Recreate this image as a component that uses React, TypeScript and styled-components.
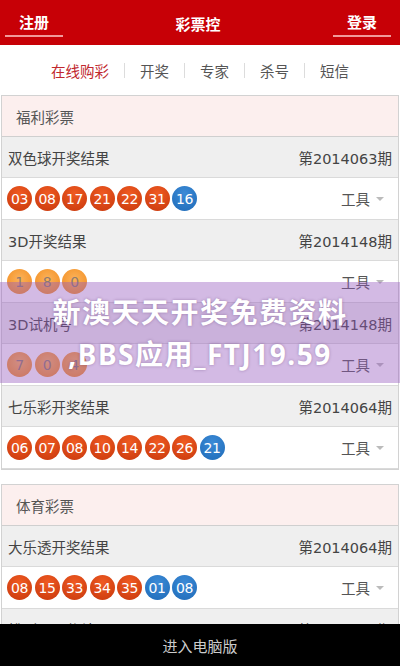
import React from 'react';
import styled, { createGlobalStyle } from 'styled-components';

const GlobalStyle = createGlobalStyle`
  html, body {
    margin: 0;
    padding: 0;
    background: #fff;
  }
  body {
    font-family: "DejaVu Sans", "Noto Sans CJK SC", sans-serif;
  }
`;

const Page = styled.div`
  position: relative;
  width: 400px;
  height: 666px;
  overflow: hidden;
  background: #fff;
`;

const Header = styled.div`
  height: 45px;
  background: #c70006;
  display: flex;
  align-items: flex-start;
  justify-content: space-between;
  padding: 0 9px 0 5px;
  box-sizing: border-box;
`;

const HeaderBtn = styled.div`
  width: 58px;
  height: 37px;
  display: flex;
  align-items: flex-end;
  justify-content: center;
  padding-bottom: 2px;
  box-sizing: border-box;
  border-bottom: 2px solid #f19a9a;
  color: #fff;
  font-family: "Noto Sans CJK SC", sans-serif;
  font-size: 15px;
  font-weight: 700;
  line-height: 22px;
`;

const HeaderTitle = styled.div`
  height: 45px;
  padding-top: 2px;
  box-sizing: border-box;
  display: flex;
  align-items: center;
  color: #fff;
  font-family: "Noto Sans CJK SC", sans-serif;
  font-size: 15px;
  font-weight: 700;
`;

const Tabs = styled.div`
  height: 50px;
  display: flex;
  align-items: center;
  justify-content: center;
`;

const Tab = styled.div<{ $active?: boolean }>`
  padding: 0 15px;
  font-family: "Noto Sans CJK SC", sans-serif;
  font-size: 14.5px;
  color: ${p => (p.$active ? '#c1272d' : '#555')};
`;

const Sep = styled.div`
  width: 1px;
  height: 15px;
  background: #dcdcdc;
`;

const Section = styled.div`
  margin: 0 1px 14px;
  border: 1px solid #d2d2d2;
`;

const SectionHead = styled.div`
  height: 40px;
  display: flex;
  align-items: center;
  padding-left: 14px;
  background: #fcefee;
  border-bottom: 1px solid #cfcfcf;
  font-size: 14.5px;
  color: #555;
`;

const TitleRow = styled.div`
  height: 40px;
  display: flex;
  align-items: center;
  justify-content: space-between;
  padding: 0 6px;
  background: #efefef;
  border-bottom: 1px solid #dadada;
  font-size: 14.5px;
  color: #444;
`;

const BallRow = styled.div`
  height: 41px;
  display: flex;
  align-items: center;
  justify-content: space-between;
  padding: 0 14px 0 5px;
  background: #fff;
  border-bottom: 1px solid #dadada;
`;

const Balls = styled.div`
  display: flex;
  gap: 2.5px;
`;

const Ball = styled.div<{ $kind: 'red' | 'blue' | 'orange' }>`
  width: 25px;
  height: 25px;
  border-radius: 50%;
  display: flex;
  align-items: center;
  justify-content: center;
  font-size: 14px;
  letter-spacing: -0.5px;
  color: ${p => (p.$kind === 'orange' ? '#8e7a70' : '#fff')};
  background: ${p =>
    p.$kind === 'blue'
      ? 'radial-gradient(circle at 50% 30%, #3b8ad6, #1f6bb8)'
      : p.$kind === 'orange'
      ? 'radial-gradient(circle at 50% 40%, #fbb25a, #f28a1a)'
      : 'radial-gradient(circle at 50% 30%, #ef5a22, #c8380c)'};
`;

const Tool = styled.div`
  display: flex;
  align-items: center;
  gap: 6px;
  font-size: 14.5px;
  color: #555;
`;

const Caret = styled.span`
  width: 0;
  height: 0;
  border-left: 4px solid transparent;
  border-right: 4px solid transparent;
  border-top: 4px solid #bbb;
`;

const Banner = styled.div`
  position: absolute;
  left: 0;
  right: 0;
  top: 282px;
  height: 101px;
  background: rgba(150, 90, 190, 0.42);
  display: flex;
  flex-direction: column;
  align-items: center;
  justify-content: center;
  gap: 2px;
  color: #fff;
  font-family: "Noto Sans", "Noto Sans CJK SC", sans-serif;
  font-weight: 700;
  font-size: 28px;
  line-height: 40px;
  letter-spacing: 1.5px;
  text-shadow: 0 0 3px rgba(60, 20, 80, 0.35);
`;

const Footer = styled.div`
  position: absolute;
  left: 0;
  right: 0;
  bottom: 0;
  height: 42px;
  background: #000;
  display: flex;
  align-items: center;
  justify-content: center;
  color: #ccc;
  font-family: "Noto Sans CJK SC", sans-serif;
  font-size: 15px;
`;

type Draw = {
  name: string;
  issue: string;
  balls: { n: string; kind: 'red' | 'blue' | 'orange' }[];
};

const red = (list: string[]) => list.map(n => ({ n, kind: 'red' as const }));
const blue = (list: string[]) => list.map(n => ({ n, kind: 'blue' as const }));
const orange = (list: string[]) => list.map(n => ({ n, kind: 'orange' as const }));

const welfare: Draw[] = [
  { name: '双色球开奖结果', issue: '第2014063期', balls: [...red(['03', '08', '17', '21', '22', '31']), ...blue(['16'])] },
  { name: '3D开奖结果', issue: '第2014148期', balls: orange(['1', '8', '0']) },
  { name: '3D试机号', issue: '第2014148期', balls: orange(['7', '0', '4']) },
  { name: '七乐彩开奖结果', issue: '第2014064期', balls: [...red(['06', '07', '08', '10', '14', '22', '26']), ...blue(['21'])] }
];

const sports: Draw[] = [
  { name: '大乐透开奖结果', issue: '第2014064期', balls: [...red(['08', '15', '33', '34', '35']), ...blue(['01', '08'])] },
  { name: '排列三开奖结果', issue: '第2014148期', balls: orange(['5', '2', '9']) }
];

const DrawBlock = ({ draw }: { draw: Draw }) => (
  <>
    <TitleRow>
      <span>{draw.name}</span>
      <span>{draw.issue}</span>
    </TitleRow>
    <BallRow>
      <Balls>
        {draw.balls.map((b, i) => (
          <Ball key={i} $kind={b.kind}>
            {b.n}
          </Ball>
        ))}
      </Balls>
      <Tool>
        工具
        <Caret />
      </Tool>
    </BallRow>
  </>
);

export default function App() {
  return (
    <Page>
      <GlobalStyle />
      <Header>
        <HeaderBtn>注册</HeaderBtn>
        <HeaderTitle>彩票控</HeaderTitle>
        <HeaderBtn>登录</HeaderBtn>
      </Header>
      <Tabs>
        <Tab $active>在线购彩</Tab>
        <Sep />
        <Tab>开奖</Tab>
        <Sep />
        <Tab>专家</Tab>
        <Sep />
        <Tab>杀号</Tab>
        <Sep />
        <Tab>短信</Tab>
      </Tabs>
      <Section>
        <SectionHead>福利彩票</SectionHead>
        {welfare.map(d => (
          <DrawBlock key={d.name} draw={d} />
        ))}
      </Section>
      <Section>
        <SectionHead>体育彩票</SectionHead>
        {sports.map(d => (
          <DrawBlock key={d.name} draw={d} />
        ))}
      </Section>
      <Banner>
        <div>新澳天天开奖免费资料</div>
        <div>,BBS应用_FTJ19.59</div>
      </Banner>
      <Footer>进入电脑版</Footer>
    </Page>
  );
}
